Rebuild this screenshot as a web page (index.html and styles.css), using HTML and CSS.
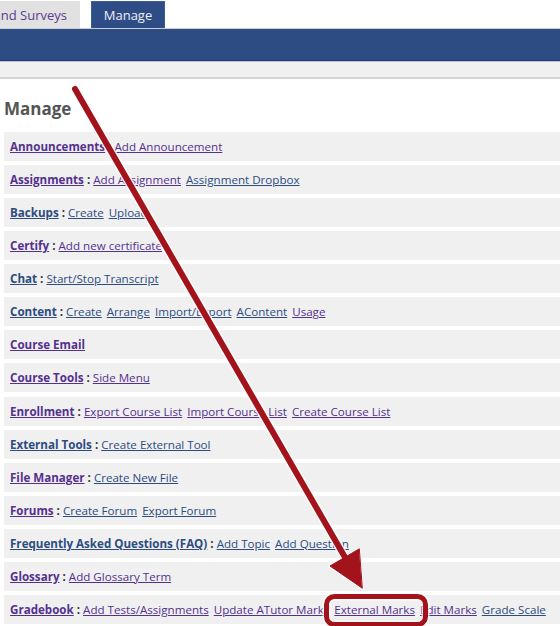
FILE: index.html
```html
<!DOCTYPE html>
<html>
<head>
<meta charset="utf-8">
<title>Manage</title>
<link rel="stylesheet" href="styles.css">
</head>
<body>
<div class="page">
  <div class="tabs">
    <div class="tab tab-off"><span>Tests and Surveys</span></div>
    <div class="tab tab-on"><span>Manage</span></div>
  </div>
  <div class="navbar"></div>
  <div class="subbar"></div>
  <h2 class="heading">Manage</h2>
  <ul class="rows">
    <li class="row"><a class="label v" href="#">Announcements</a><b class="sep"> : </b><a class="v" href="#">Add Announcement</a></li>
    <li class="row"><a class="label v" href="#">Assignments</a><b class="sep"> : </b><a class="v" href="#">Add Assignment</a> <a href="#">Assignment Dropbox</a></li>
    <li class="row"><a class="label" href="#">Backups</a><b class="sep"> : </b><a href="#">Create</a> <a href="#">Upload</a></li>
    <li class="row"><a class="label v" href="#">Certify</a><b class="sep"> : </b><a class="v" href="#">Add new certificate</a></li>
    <li class="row"><a class="label" href="#">Chat</a><b class="sep"> : </b><a href="#">Start/Stop Transcript</a></li>
    <li class="row"><a class="label" href="#">Content</a><b class="sep"> : </b><a href="#">Create</a> <a href="#">Arrange</a> <a href="#">Import/Export</a> <a href="#">AContent</a> <a class="v" href="#">Usage</a></li>
    <li class="row"><a class="label v" href="#">Course Email</a></li>
    <li class="row"><a class="label v" href="#">Course Tools</a><b class="sep"> : </b><a class="v" href="#">Side Menu</a></li>
    <li class="row"><a class="label v" href="#">Enrollment</a><b class="sep"> : </b><a class="v" href="#">Export Course List</a> <a class="v" href="#">Import Course List</a> <a class="v" href="#">Create Course List</a></li>
    <li class="row"><a class="label" href="#">External Tools</a><b class="sep"> : </b><a href="#">Create External Tool</a></li>
    <li class="row"><a class="label v" href="#">File Manager</a><b class="sep"> : </b><a href="#">Create New File</a></li>
    <li class="row"><a class="label v" href="#">Forums</a><b class="sep"> : </b><a href="#">Create Forum</a> <a href="#">Export Forum</a></li>
    <li class="row"><a class="label" href="#">Frequently Asked Questions (FAQ)</a><b class="sep"> : </b><a href="#">Add Topic</a> <a href="#">Add Question</a></li>
    <li class="row"><a class="label v" href="#">Glossary</a><b class="sep"> : </b><a class="v" href="#">Add Glossary Term</a></li>
    <li class="row"><a class="label v" href="#">Gradebook</a><b class="sep"> : </b><a class="v" href="#">Add Tests/Assignments</a> <a class="v" href="#">Update ATutor Marks</a> <a class="v" href="#">External Marks</a> <a class="v" href="#">Edit Marks</a> <a href="#">Grade Scale</a></li>
  </ul>
  <svg class="overlay" width="560" height="626" viewBox="0 0 560 626">
    <g stroke-linecap="round" stroke-linejoin="round">
      <line x1="75" y1="89" x2="350" y2="566" stroke="#ffffff" stroke-opacity="0.8" stroke-width="9"/>
      <polygon points="362,588 330,566 359,549" fill="#ffffff" fill-opacity="0.8" stroke="#ffffff" stroke-opacity="0.8" stroke-width="3"/>
      <line x1="75" y1="89" x2="350" y2="566" stroke="#a3131b" stroke-width="6"/>
      <polygon points="362,588 330,566 359,549" fill="#a3131b" stroke="#a3131b" stroke-width="1"/>
      <rect x="326.5" y="596.5" width="99" height="28" rx="8" ry="8" fill="none" stroke="#ffffff" stroke-opacity="0.7" stroke-width="8"/>
      <rect x="326.5" y="596.5" width="99" height="28" rx="8" ry="8" fill="none" stroke="#a3131b" stroke-width="5"/>
    </g>
  </svg>
</div>
</body>
</html>
```
FILE: styles.css
```css
html, body {
  margin: 0;
  padding: 0;
  background: #ffffff;
}
.page {
  position: relative;
  width: 560px;
  height: 626px;
  overflow: hidden;
  font-family: "Open Sans", "DejaVu Sans", sans-serif;
  font-size: 11.6px;
}
.tabs {
  display: flex;
  height: 28px;
  align-items: flex-end;
}
.tab {
  display: flex;
  align-items: center;
  height: 27px;
  overflow: hidden;
  white-space: nowrap;
  font-size: 13px;
  box-sizing: border-box;
}
.tab-off {
  width: 80px;
  justify-content: flex-end;
  padding-right: 13px;
  background: #e1e1e1;
  color: #5b3b93;
}
.tab-on {
  margin-left: 11px;
  width: 74px;
  justify-content: center;
  background: #2e4c85;
  color: #eef0f6;
  border-top: 1px solid #3f5d95;
  border-left: 1px solid #3f5d95;
  border-right: 1px solid #3f5d95;
}
.navbar {
  height: 31px;
  background: #2e4c84;
  border-top: 1px solid #c9ccd3;
  border-bottom: 1px solid #22396a;
}
.subbar {
  height: 15px;
  background: #f0f0f0;
  border-top: 1px solid #b9c4dc;
  border-bottom: 2px solid #d3d3d3;
}
.heading {
  margin: 18px 0 0 4px;
  font-size: 17px;
  font-weight: 700;
  color: #555555;
  line-height: 24px;
  height: 28px;
}
.rows {
  list-style: none;
  margin: 7px 0 0 4px;
  padding: 0;
  display: flex;
  flex-direction: column;
  gap: 4.07px;
}
.row {
  height: 29px;
  line-height: 29px;
  background: #f0f0f0;
  padding-left: 6px;
  white-space: nowrap;
  color: #333333;
}
.row a {
  color: #2d4c80;
  text-decoration: underline;
  margin-right: 2px;
}
.row a.v {
  color: #54318f;
}
.row a.label {
  font-weight: 700;
  margin-right: 0;
}
.sep {
  font-weight: 700;
  color: #333333;
}
.overlay {
  position: absolute;
  left: 0;
  top: 0;
  pointer-events: none;
}
```
